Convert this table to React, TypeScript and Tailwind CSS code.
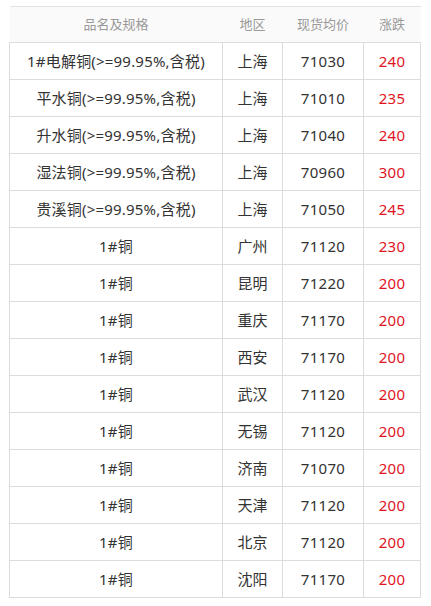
const rows = [
  ["1#电解铜(>=99.95%,含税)", "上海", "71030", "240"],
  ["平水铜(>=99.95%,含税)", "上海", "71010", "235"],
  ["升水铜(>=99.95%,含税)", "上海", "71040", "240"],
  ["湿法铜(>=99.95%,含税)", "上海", "70960", "300"],
  ["贵溪铜(>=99.95%,含税)", "上海", "71050", "245"],
  ["1#铜", "广州", "71120", "230"],
  ["1#铜", "昆明", "71220", "200"],
  ["1#铜", "重庆", "71170", "200"],
  ["1#铜", "西安", "71170", "200"],
  ["1#铜", "武汉", "71120", "200"],
  ["1#铜", "无锡", "71120", "200"],
  ["1#铜", "济南", "71070", "200"],
  ["1#铜", "天津", "71120", "200"],
  ["1#铜", "北京", "71120", "200"],
  ["1#铜", "沈阳", "71170", "200"],
];

export default function App() {
  return (
    <div
      className="bg-white w-[431px] h-[606px] pt-[6px] pl-[9px]"
      style={{ fontFamily: '"Noto Sans", "Noto Sans CJK SC", sans-serif' }}
    >
      <table className="w-[411px] border-collapse table-fixed">
        <colgroup>
          <col className="w-[213px]" />
          <col className="w-[60px]" />
          <col className="w-[81px]" />
          <col className="w-[57px]" />
        </colgroup>
        <thead>
          <tr className="h-[36px] bg-[#fafafa] border-t border-b border-[#e3e3e3] text-[13px] text-[#999]">
            <th className="font-normal">品名及规格</th>
            <th className="font-normal">地区</th>
            <th className="font-normal">现货均价</th>
            <th className="font-normal">涨跌</th>
          </tr>
        </thead>
        <tbody>
          {rows.map((r, i) => (
            <tr key={i} className="h-[37px] text-[15px] text-[#333]">
              <td className="border border-[#dcdcdc] text-center tracking-[0.2px]">{r[0]}</td>
              <td className="border border-[#dcdcdc] text-center">{r[1]}</td>
              <td className="border border-[#dcdcdc] text-center tracking-[0.3px]">{r[2]}</td>
              <td className="border border-[#dcdcdc] text-center tracking-[0.3px] text-[#e0141e]">{r[3]}</td>
            </tr>
          ))}
        </tbody>
      </table>
    </div>
  );
}
